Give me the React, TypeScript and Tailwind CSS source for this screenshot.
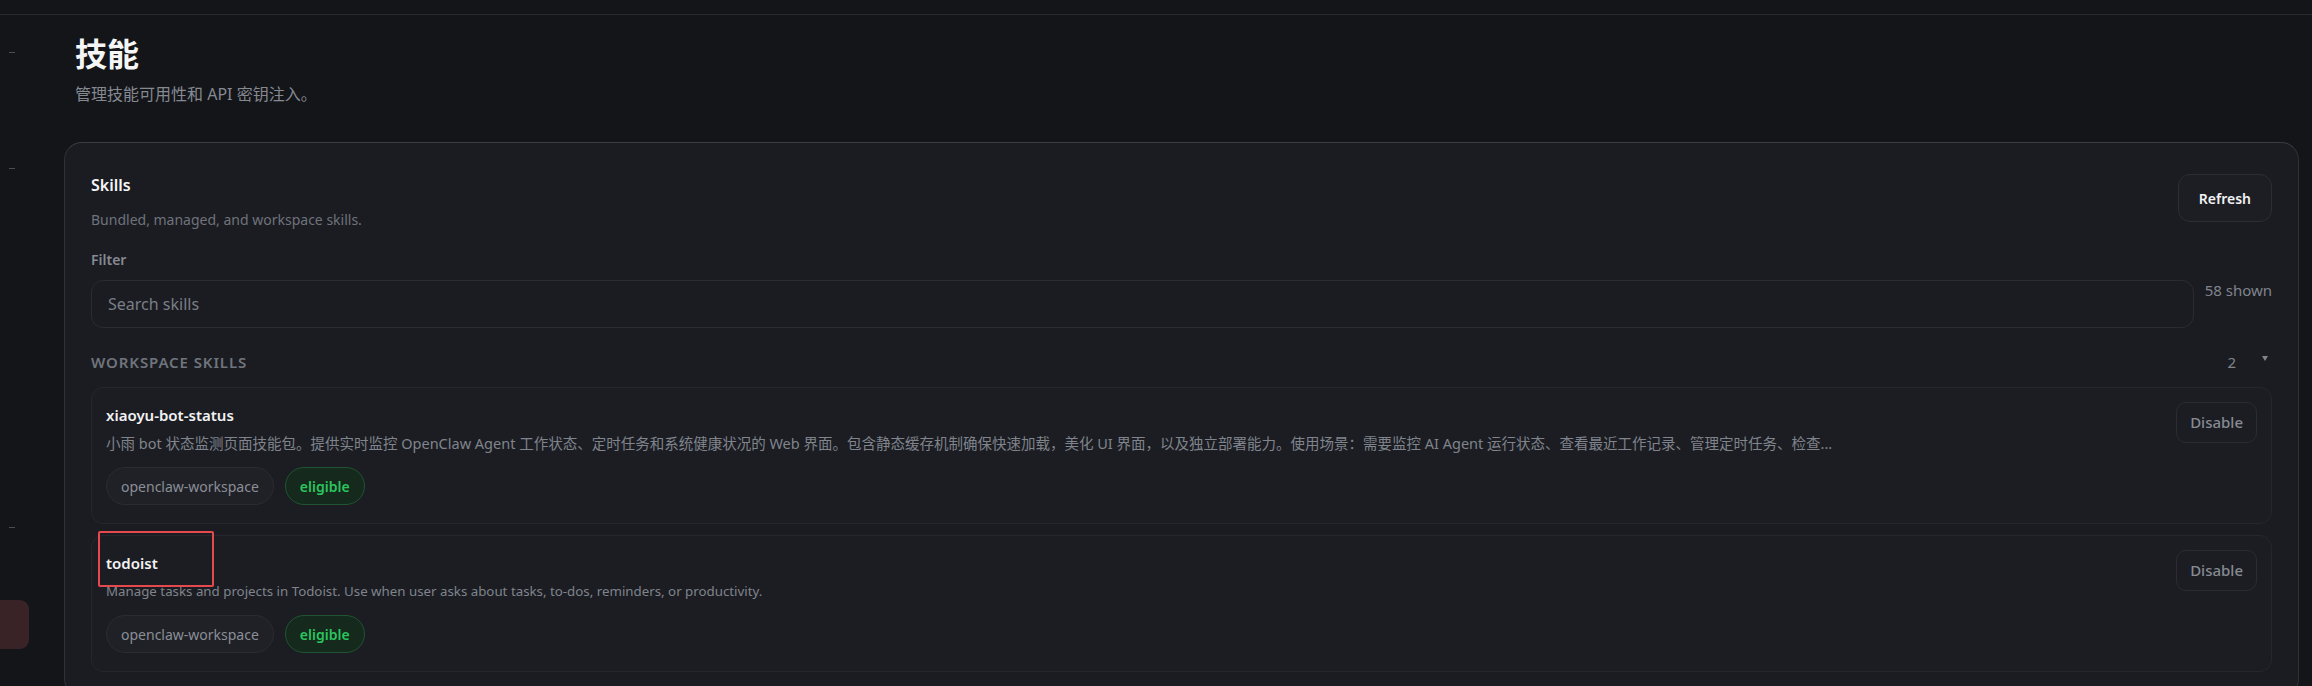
const skills = [
  {
    name: "xiaoyu-bot-status",
    description:
      "小雨 bot 状态监测页面技能包。提供实时监控 OpenClaw Agent 工作状态、定时任务和系统健康状况的 Web 界面。包含静态缓存机制确保快速加载，美化 UI 界面，以及独立部署能力。使用场景：需要监控 AI Agent 运行状态、查看最近工作记录、管理定时任务、检查...",
    cjk: true,
    source: "openclaw-workspace",
    highlighted: false,
  },
  {
    name: "todoist",
    description:
      "Manage tasks and projects in Todoist. Use when user asks about tasks, to-dos, reminders, or productivity.",
    cjk: false,
    source: "openclaw-workspace",
    highlighted: true,
  },
];

function SkillRow({ skill }: { skill: (typeof skills)[number] }) {
  return (
    <div className="relative flex items-start justify-between gap-4 rounded-[12px] border border-[#25272d] bg-[#1b1d23] px-[14px] pt-[14px] pb-[18px]">
      {skill.highlighted && (
        <div className="pointer-events-none absolute left-[6px] top-[-5px] h-[56px] w-[116px] rounded-[2px] border-2 border-[#e5484d]" />
      )}
      <div className="min-w-0 flex-1 pt-[2px]">
        <div className="text-[15px] leading-[22px] font-semibold text-[#f2f2f3]">{skill.name}</div>
        <div
          className={`mt-[7px] leading-[20px] text-[#80848c] ${skill.cjk ? "text-[14.5px]" : "text-[13.3px]"}`}
        >
          {skill.description}
        </div>
        <div className="mt-[14px] flex items-center gap-[11px]">
          <span className="flex h-[38px] items-center rounded-full border border-[#2a2c32] bg-[#1f2127] px-[14px] text-[14px] text-[#8b8e96]">
            {skill.source}
          </span>
          <span className="flex h-[38px] items-center rounded-full border border-[#1f5532] bg-[#15291d] px-[14px] text-[14px] font-semibold text-[#2bc55d]">
            eligible
          </span>
        </div>
      </div>
      <button className="h-[41px] shrink-0 rounded-[10px] border border-[#2a2c32] bg-[#1b1d23] px-[13px] text-[15px] font-medium text-[#878a92]">
        Disable
      </button>
    </div>
  );
}

export default function App() {
  return (
    <div className="h-[686px] w-full overflow-hidden bg-[#141519] font-['Noto_Sans','Noto_Sans_CJK_SC',sans-serif]">
      <div className="h-[15px] border-b border-[#27282d]" />
      <div className="flex">
        {/* collapsed nav */}
        <aside className="flex w-[64px] shrink-0 flex-col">
          <div className="mt-[37px] ml-[9px] h-px w-[6px] bg-[#4b4d53]" />
          <div className="mt-[115px] ml-[9px] h-px w-[6px] bg-[#4b4d53]" />
          <div className="mt-[358px] ml-[9px] h-px w-[6px] bg-[#4b4d53]" />
          <div className="mt-[72px] h-[49px] w-[29px] rounded-r-[9px] bg-[#3a2327]" />
        </aside>

        <main className="min-w-0 flex-1 pr-[13px]">
          <div className="pl-[11px] pt-[19px]">
            <h1 className="text-[32px] leading-[40px] font-bold text-[#f5f5f6]">技能</h1>
            <p className="mt-[8px] text-[16px] leading-[24px] text-[#858992]">管理技能可用性和 API 密钥注入。</p>
          </div>

          <section className="mt-[36px] rounded-[18px] border border-[#2f3137] border-t-[#3b3d43] bg-[#1a1c22] px-[26px] pt-[31px]">
            <div className="flex items-start justify-between">
              <div>
                <h2 className="text-[16px] leading-[22px] font-semibold text-[#f5f5f6]">Skills</h2>
                <p className="mt-[14px] text-[14px] leading-[20px] text-[#6f737b]">Bundled, managed, and workspace skills.</p>
              </div>
              <button className="h-[48px] rounded-[12px] border border-[#2c2e34] bg-[#1c1e24] px-5 text-[14px] font-semibold text-[#f2f2f3]">
                Refresh
              </button>
            </div>

            <label className="mt-[20px] block text-[14px] leading-[20px] font-semibold text-[#878a92]">Filter</label>
            <div className="mt-[10px] flex items-start gap-[11px]">
              <input
                placeholder="Search skills"
                className="h-[48px] flex-1 rounded-[12px] border border-[#2a2c32] bg-[#1a1c22] px-4 text-[16px] text-[#d4d4d8] placeholder:text-[#7a7e86] outline-none"
              />
              <span className="text-[15px] leading-[20px] text-[#80848c]">58 shown</span>
            </div>

            <div className="mt-[24px] flex items-center justify-between">
              <span className="text-[15px] leading-[20px] font-semibold tracking-[0.06em] text-[#70747c]">WORKSPACE SKILLS</span>
              <div className="flex items-center gap-[26px] pr-[4px]">
                <span className="text-[15px] leading-[20px] text-[#80848c]">2</span>
                <svg width="6" height="5" viewBox="0 0 6 5" className="mb-[8px]">
                  <path d="M0 0 H6 L3 5 Z" fill="#80848c" />
                </svg>
              </div>
            </div>

            <div className="mt-[15px] flex flex-col gap-[11px] pb-6">
              {skills.map((s) => (
                <SkillRow key={s.name} skill={s} />
              ))}
            </div>
          </section>
        </main>
      </div>
    </div>
  );
}
